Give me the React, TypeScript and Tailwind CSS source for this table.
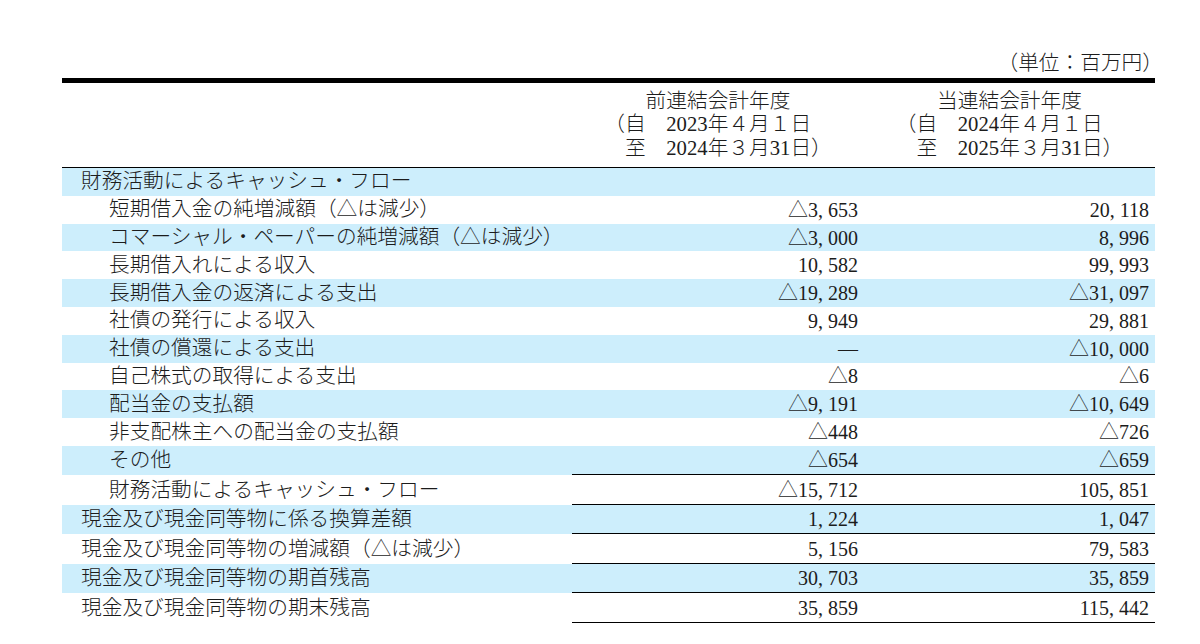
const font = { fontFamily: '"Liberation Serif", "Noto Sans CJK JP", serif' };

type Row = { label: string; indent: 1 | 2; prev: string; curr: string; rule?: boolean };

const rows: Row[] = [
  { label: "財務活動によるキャッシュ・フロー", indent: 1, prev: "", curr: "" },
  { label: "短期借入金の純増減額（△は減少）", indent: 2, prev: "△3,653", curr: "20,118" },
  { label: "コマーシャル・ペーパーの純増減額（△は減少）", indent: 2, prev: "△3,000", curr: "8,996" },
  { label: "長期借入れによる収入", indent: 2, prev: "10,582", curr: "99,993" },
  { label: "長期借入金の返済による支出", indent: 2, prev: "△19,289", curr: "△31,097" },
  { label: "社債の発行による収入", indent: 2, prev: "9,949", curr: "29,881" },
  { label: "社債の償還による支出", indent: 2, prev: "―", curr: "△10,000" },
  { label: "自己株式の取得による支出", indent: 2, prev: "△8", curr: "△6" },
  { label: "配当金の支払額", indent: 2, prev: "△9,191", curr: "△10,649" },
  { label: "非支配株主への配当金の支払額", indent: 2, prev: "△448", curr: "△726" },
  { label: "その他", indent: 2, prev: "△654", curr: "△659", rule: true },
  { label: "財務活動によるキャッシュ・フロー", indent: 2, prev: "△15,712", curr: "105,851", rule: true },
  { label: "現金及び現金同等物に係る換算差額", indent: 1, prev: "1,224", curr: "1,047", rule: true },
  { label: "現金及び現金同等物の増減額（△は減少）", indent: 1, prev: "5,156", curr: "79,583", rule: true },
  { label: "現金及び現金同等物の期首残高", indent: 1, prev: "30,703", curr: "35,859", rule: true },
  { label: "現金及び現金同等物の期末残高", indent: 1, prev: "35,859", curr: "115,442", rule: true },
];

// Mincho-style comma takes a full half-width cell
const Num = ({ value }: { value: string }) => {
  const parts = value.split(",");
  return (
    <>
      {parts.map((p, i) => (
        <span key={i}>
          {i > 0 && <span className="inline-block w-[10px]">,</span>}
          {p}
        </span>
      ))}
    </>
  );
};

const PeriodHeader = ({ title, from, to }: { title: string; from: string; to: string }) => (
  <div className="flex flex-col items-center leading-[23.5px]">
    <div>{title}</div>
    <div className="text-left whitespace-pre">
      <div>{from}</div>
      <div>{to}</div>
    </div>
  </div>
);

export default function App() {
  return (
    <div className="min-h-screen bg-white text-[20.7px] font-light text-[#1c1c1c]" style={font}>
      <div className="ml-[62px] w-[1093px] pt-[51px]">
        <div className="text-right leading-[24px] mr-[-8px]">（単位：百万円）</div>
        <div className="mt-[3px] h-[4.5px] bg-black" />

        <div className="grid grid-cols-[510px_292px_291px] h-[85.5px] items-center border-b-[1.5px] border-black">
          <div />
          <PeriodHeader title="前連結会計年度" from="（自　2023年４月１日" to="　至　2024年３月31日）" />
          <PeriodHeader title="当連結会計年度" from="（自　2024年４月１日" to="　至　2025年３月31日）" />
        </div>

        {rows.map((row, i) => {
          const bg = i % 2 === 0 ? "bg-[#cdeefc]" : "bg-white";
          const height = row.rule ? "h-[29.5px]" : "h-[27.8px]";
          const cell = row.rule ? "border-b-[1.5px] border-black" : "";
          return (
            <div key={i} className={`grid grid-cols-[510px_292px_291px] ${bg}`}>
              <div
                className={`flex items-center whitespace-nowrap ${
                  row.indent === 1 ? "pl-[19px]" : "pl-[47px]"
                } ${height}`}
              >
                {row.label}
              </div>
              <div className={`flex items-center justify-end pr-[6px] text-[20px] ${height} ${cell}`}>
                <Num value={row.prev} />
              </div>
              <div className={`flex items-center justify-end pr-[6px] text-[20px] ${height} ${cell}`}>
                <Num value={row.curr} />
              </div>
            </div>
          );
        })}
      </div>
    </div>
  );
}
